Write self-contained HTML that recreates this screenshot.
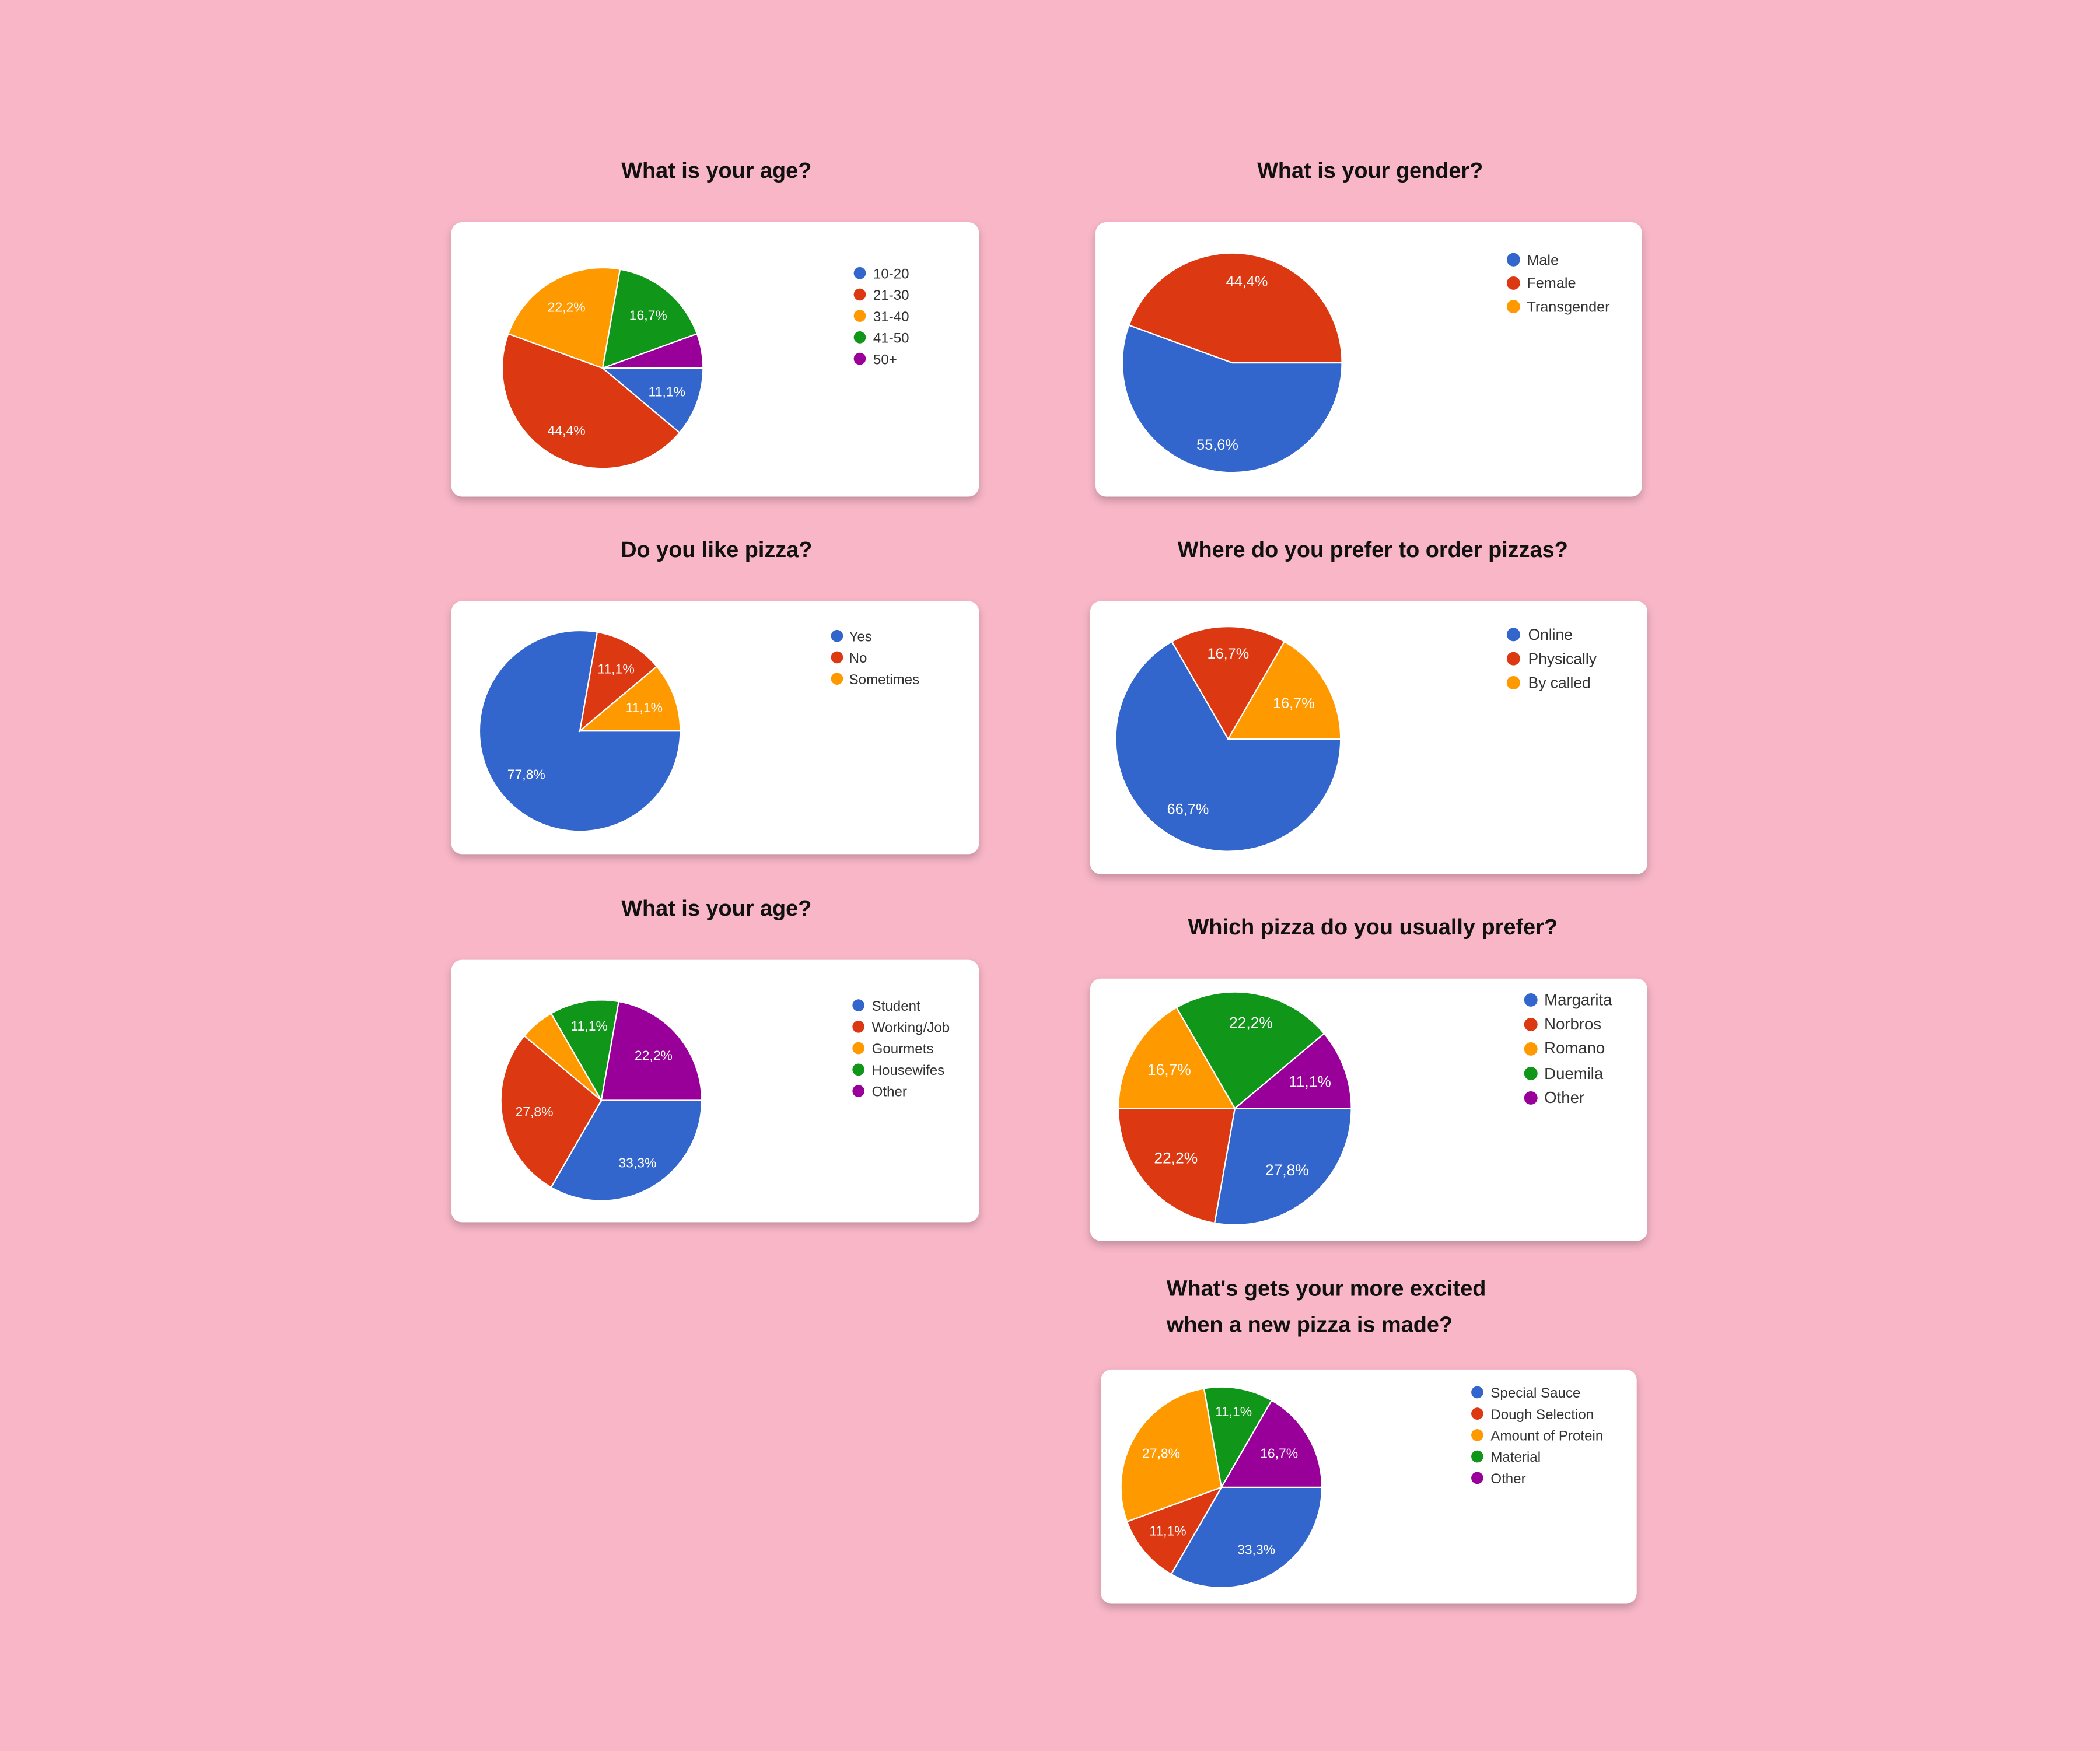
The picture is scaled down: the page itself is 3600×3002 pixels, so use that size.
<!DOCTYPE html>
<html><head><meta charset="utf-8"><style>
html,body{margin:0;padding:0;background:#f8b6c7;}
svg{display:block}
.t{font-family:"Liberation Sans",sans-serif;font-weight:bold;font-size:16.5px;fill:#111;}
.l{font-family:"Liberation Sans",sans-serif;font-size:10.5px;fill:#333;}
.p{font-family:"Liberation Sans",sans-serif;font-size:10px;fill:#fff;text-anchor:middle;}
</style></head><body>
<svg id="s" width="3600" height="3002" viewBox="0 0 1568 1308" preserveAspectRatio="none" xmlns="http://www.w3.org/2000/svg">
<defs><filter id="sh" x="-10%" y="-10%" width="120%" height="130%"><feDropShadow dx="0" dy="3" stdDeviation="3" flood-color="#000" flood-opacity="0.22"/></filter></defs>
<rect width="1568" height="1308" fill="#f8b6c7"/>
<g filter="url(#sh)" fill="#fff">
<rect x="337" y="166" width="394" height="205" rx="8"/>
<rect x="818" y="166" width="408" height="205" rx="8"/>
<rect x="337" y="449" width="394" height="189" rx="8"/>
<rect x="814" y="449" width="416" height="204" rx="8"/>
<rect x="337" y="717" width="394" height="196" rx="8"/>
<rect x="814" y="731" width="416" height="196" rx="8"/>
<rect x="822" y="1023" width="400" height="175" rx="8"/>
</g>
<g class="t" text-anchor="middle">
<text x="535" y="133">What is your age?</text>
<text x="1023" y="133">What is your gender?</text>
<text x="535" y="416">Do you like pizza?</text>
<text x="1025" y="416">Where do you prefer to order pizzas?</text>
<text x="535" y="684">What is your age?</text>
<text x="1025" y="698">Which pizza do you usually prefer?</text>
</g>
<text class="t" x="871" y="968">What's gets your more excited</text>
<text class="t" x="871" y="995">when a new pizza is made?</text>
<g id="pies"></g>
<g class="p">
<text x="423" y="233">22,2%</text><text x="484" y="239">16,7%</text><text x="498" y="296">11,1%</text><text x="423" y="325">44,4%</text>
<text x="931" y="214" style="font-size:11px">44,4%</text><text x="909" y="336" style="font-size:11px">55,6%</text>
<text x="460" y="503">11,1%</text><text x="481" y="532">11,1%</text><text x="393" y="582">77,8%</text>
<text x="917" y="492" style="font-size:11px">16,7%</text><text x="966" y="529" style="font-size:11px">16,7%</text><text x="887" y="608" style="font-size:11px">66,7%</text>
<text x="440" y="770">11,1%</text><text x="488" y="792">22,2%</text><text x="399" y="834">27,8%</text><text x="476" y="872">33,3%</text>
<text x="934" y="768" style="font-size:11.5px">22,2%</text><text x="873" y="803" style="font-size:11.5px">16,7%</text><text x="978" y="812" style="font-size:11.5px">11,1%</text><text x="878" y="869" style="font-size:11.5px">22,2%</text><text x="961" y="878" style="font-size:11.5px">27,8%</text>
<text x="921" y="1058">11,1%</text><text x="867" y="1089">27,8%</text><text x="955" y="1089">16,7%</text><text x="872" y="1147">11,1%</text><text x="938" y="1161">33,3%</text>
</g>
<g id="leg"></g>
<g class="l">
<text x="652" y="208">10-20</text><text x="652" y="224">21-30</text><text x="652" y="240">31-40</text><text x="652" y="256">41-50</text><text x="652" y="272">50+</text>
<text x="1140" y="198" style="font-size:11px">Male</text><text x="1140" y="215" style="font-size:11px">Female</text><text x="1140" y="233" style="font-size:11px">Transgender</text>
<text x="634" y="479">Yes</text><text x="634" y="495">No</text><text x="634" y="511">Sometimes</text>
<text x="1141" y="478" style="font-size:11.5px">Online</text><text x="1141" y="496" style="font-size:11.5px">Physically</text><text x="1141" y="514" style="font-size:11.5px">By called</text>
<text x="651" y="755">Student</text><text x="651" y="771">Working/Job</text><text x="651" y="787">Gourmets</text><text x="651" y="803">Housewifes</text><text x="651" y="819">Other</text>
<text x="1153" y="751" style="font-size:12px">Margarita</text><text x="1153" y="769" style="font-size:12px">Norbros</text><text x="1153" y="787" style="font-size:12px">Romano</text><text x="1153" y="806" style="font-size:12px">Duemila</text><text x="1153" y="824" style="font-size:12px">Other</text>
<text x="1113" y="1044">Special Sauce</text><text x="1113" y="1060">Dough Selection</text><text x="1113" y="1076">Amount of Protein</text><text x="1113" y="1092">Material</text><text x="1113" y="1108">Other</text>
</g>
</svg>
<script>
var C=["#3366cc","#dc3912","#ff9900","#109618","#990099"];
var pies=[
 [450,275,75,90,[40,160,80,60,20]],
 [920,271,82,90,[200,160]],
 [433,546,75,90,[280,40,40]],
 [917,552,84,90,[240,60,60]],
 [449,822,75,90,[120,100,20,40,80]],
 [922,828,87,90,[100,80,60,80,40]],
 [912,1111,75,90,[120,40,100,40,60]]
];
var h="";
function pt(cx,cy,r,a){a=a*Math.PI/180;return [cx+r*Math.sin(a),cy-r*Math.cos(a)];}
pies.forEach(function(p){var a=p[3];p[4].forEach(function(d,i){var s=pt(p[0],p[1],p[2],a),e=pt(p[0],p[1],p[2],a+d);
h+='<path d="M'+p[0]+' '+p[1]+'L'+s[0].toFixed(2)+' '+s[1].toFixed(2)+'A'+p[2]+' '+p[2]+' 0 '+(d>180?1:0)+' 1 '+e[0].toFixed(2)+' '+e[1].toFixed(2)+'Z" fill="'+C[i]+'" stroke="#fff" stroke-width="1"/>';a+=d;});});
document.getElementById("pies").innerHTML=h;
var L=[[642,204,16,5,4.5],[1130,194,17.5,3,5],[625,475,16,3,4.5],[1130,474,18,3,5],[641,751,16,5,4.5],[1143,747,18.3,5,5],[1103,1040,16,5,4.5]];
var g="";L.forEach(function(l){for(var i=0;i<l[3];i++)g+='<circle cx="'+l[0]+'" cy="'+(l[1]+i*l[2])+'" r="'+l[4]+'" fill="'+C[i]+'"/>';});
document.getElementById("leg").innerHTML=g;
</script>
</body></html>
